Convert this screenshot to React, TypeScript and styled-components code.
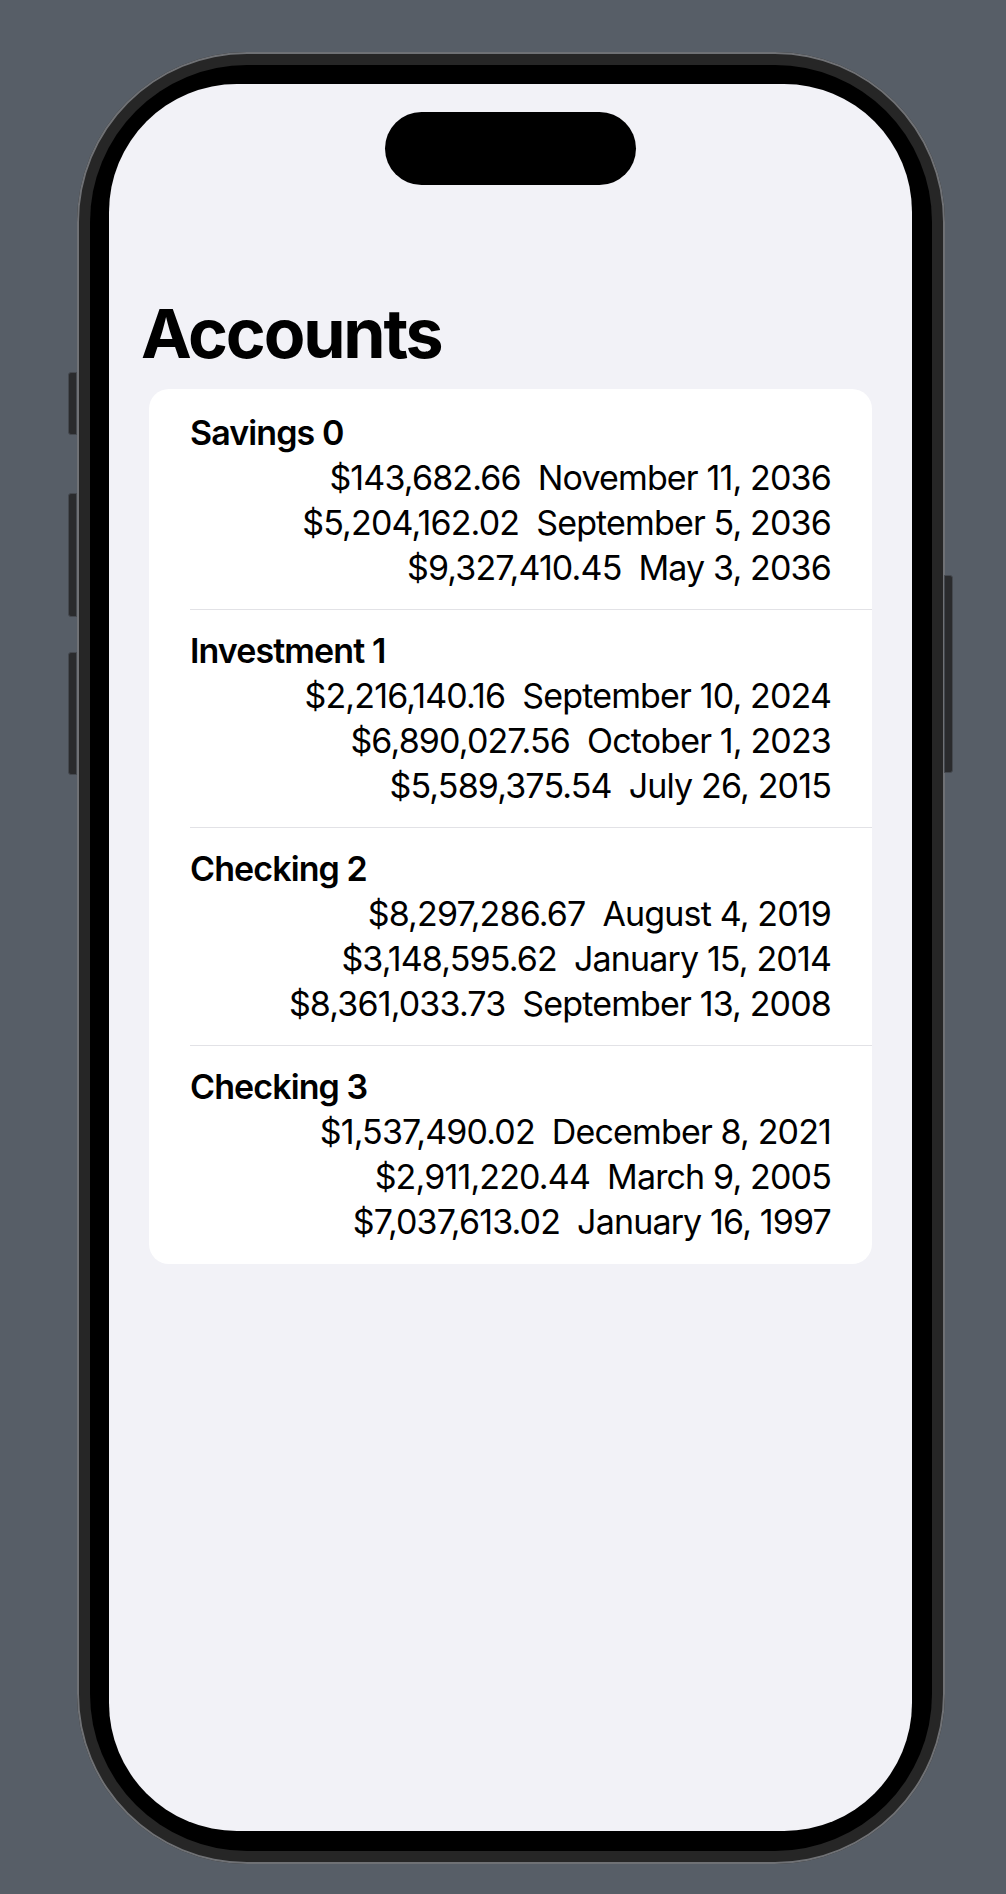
import React from "react"
import styled, { createGlobalStyle } from "styled-components"

const GlobalStyle = createGlobalStyle`
  html, body {
    margin: 0;
    padding: 0;
    background: #575e67;
  }
  body {
    font-family: Inter, "Noto Sans", "Liberation Sans", sans-serif;
    -webkit-font-smoothing: antialiased;
  }
`

type Entry = { amount: string; date: string }
type Account = { name: string; entries: Entry[] }

const accounts: Account[] = [
  {
    name: "Savings 0",
    entries: [
      { amount: "$143,682.66", date: "November 11, 2036" },
      { amount: "$5,204,162.02", date: "September 5, 2036" },
      { amount: "$9,327,410.45", date: "May 3, 2036" },
    ],
  },
  {
    name: "Investment 1",
    entries: [
      { amount: "$2,216,140.16", date: "September 10, 2024" },
      { amount: "$6,890,027.56", date: "October 1, 2023" },
      { amount: "$5,589,375.54", date: "July 26, 2015" },
    ],
  },
  {
    name: "Checking 2",
    entries: [
      { amount: "$8,297,286.67", date: "August 4, 2019" },
      { amount: "$3,148,595.62", date: "January 15, 2014" },
      { amount: "$8,361,033.73", date: "September 13, 2008" },
    ],
  },
  {
    name: "Checking 3",
    entries: [
      { amount: "$1,537,490.02", date: "December 8, 2021" },
      { amount: "$2,911,220.44", date: "March 9, 2005" },
      { amount: "$7,037,613.02", date: "January 16, 1997" },
    ],
  },
]

const Stage = styled.div`
  padding: 52px 0 0 77px;
  height: 1842px;
`

const Frame = styled.div`
  position: relative;
  width: 868px;
  height: 1812px;
  box-sizing: border-box;
  padding: 13px;
  border-radius: 170px;
  background: #262626;
  box-shadow: inset 0 0 0 2px #6f7175;
`

const SideButton = styled.div<{ $side: "left" | "right"; $top: number; $height: number }>`
  position: absolute;
  top: ${p => p.$top}px;
  ${p => (p.$side === "left" ? "left: -9px;" : "right: -8px;")}
  width: 9px;
  height: ${p => p.$height}px;
  background: #2a2b2d;
  border: 1px solid #45494f;
  box-sizing: border-box;
  border-radius: ${p => (p.$side === "left" ? "3px 0 0 3px" : "0 3px 3px 0")};
`

const Bezel = styled.div`
  height: 100%;
  box-sizing: border-box;
  padding: 19px 20px 20px 19px;
  border-radius: 157px;
  background: #000;
`

const Screen = styled.div`
  height: 100%;
  border-radius: 128px;
  background: #f2f2f7;
  overflow: hidden;
  display: flex;
  flex-direction: column;
`

const Island = styled.div`
  align-self: center;
  margin-top: 28px;
  width: 251px;
  height: 73px;
  border-radius: 37px;
  background: #000;
`

const LargeTitle = styled.h1`
  margin: 106px 0 0;
  padding-left: 32px;
  font-size: 68px;
  line-height: 84px;
  font-weight: 700;
  letter-spacing: -2.2px;
  color: #000;
`

const Card = styled.div`
  margin: 14px 40px 0;
  padding-top: 2.5px;
  background: #fff;
  border-radius: 20px;
  overflow: hidden;
`

const Section = styled.div<{ $last: boolean }>`
  margin-left: 41px;
  padding: 19px 41px 19px 0;
  border-bottom: 1.5px solid ${p => (p.$last ? "transparent" : "#e2e2e6")};
`

const AccountName = styled.div`
  font-size: 34px;
  line-height: 44px;
  font-weight: 600;
  letter-spacing: -0.9px;
  color: #000;
`

const EntryRow = styled.div`
  display: flex;
  justify-content: flex-end;
  gap: 17px;
  font-size: 34px;
  line-height: 45px;
  font-weight: 400;
  letter-spacing: -0.85px;
  color: #000;
`

export default function App() {
  return (
    <>
      <GlobalStyle />
      <Stage>
        <Frame>
          <SideButton $side="left" $top={320} $height={63} />
          <SideButton $side="left" $top={441} $height={124} />
          <SideButton $side="left" $top={600} $height={123} />
          <SideButton $side="right" $top={523} $height={198} />
          <Bezel>
            <Screen>
              <Island />
              <LargeTitle>Accounts</LargeTitle>
              <Card>
                {accounts.map((account, i) => (
                  <Section key={account.name} $last={i === accounts.length - 1}>
                    <AccountName>{account.name}</AccountName>
                    {account.entries.map(entry => (
                      <EntryRow key={entry.amount}>
                        <span>{entry.amount}</span>
                        <span>{entry.date}</span>
                      </EntryRow>
                    ))}
                  </Section>
                ))}
              </Card>
            </Screen>
          </Bezel>
        </Frame>
      </Stage>
    </>
  )
}
